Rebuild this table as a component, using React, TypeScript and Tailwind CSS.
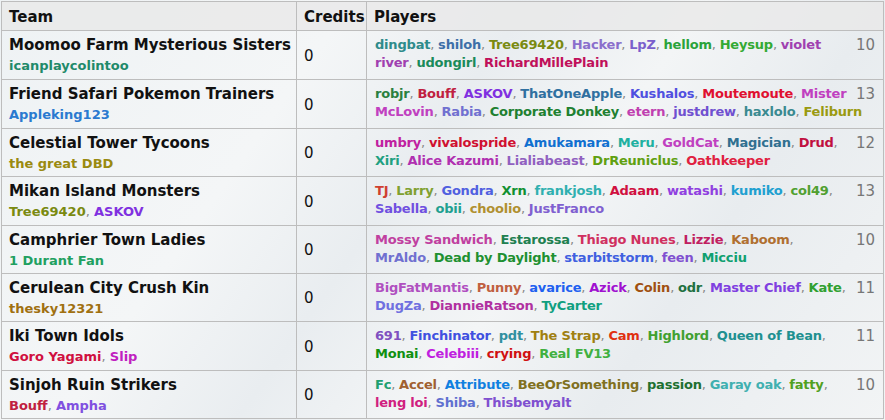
import React from "react";

type P = [string, string];
type Row = { team: string; owners: P[]; credits: string; line1: P[]; line2: P[]; split?: boolean; count: string; h: string };

const rows: Row[] = [
  {
    team: "Moomoo Farm Mysterious Sisters",
    owners: [["icanplaycolintoo", "#1f8a6a"]],
    credits: "0",
    count: "10",
    h: "h-[49px]",
    split: true,
    line1: [
      ["dingbat", "#2e8b8b"], ["shiloh", "#3d6fa8"], ["Tree69420", "#7a8a10"], ["Hacker", "#8a6fcc"],
      ["LpZ", "#7a5fcc"], ["hellom", "#2aa33a"], ["Heysup", "#33aa33"], ["violet", "#a040b0"],
    ],
    line2: [["river", "#a040b0"], ["udongirl", "#1a8a5a"], ["RichardMillePlain", "#c0105a"]],
  },
  {
    team: "Friend Safari Pokemon Trainers",
    owners: [["Appleking123", "#2a7ad0"]],
    credits: "0",
    count: "13",
    h: "h-[49px]",
    split: true,
    line1: [
      ["robjr", "#2a8040"], ["Bouff", "#c02040"], ["ASKOV", "#8030e0"], ["ThatOneApple", "#3070a0"],
      ["Kushalos", "#5050e0"], ["Moutemoute", "#e01030"], ["Mister", "#c040c0"],
    ],
    line2: [
      ["McLovin", "#c040c0"], ["Rabia", "#7070d0"], ["Corporate Donkey", "#208030"], ["etern", "#c040b0"],
      ["justdrew", "#7050d0"], ["haxlolo", "#3a8a90"], ["Feliburn", "#9a9a10"],
    ],
  },
  {
    team: "Celestial Tower Tycoons",
    owners: [["the great DBD", "#9a8a10"]],
    credits: "0",
    count: "12",
    h: "h-[48px]",
    line1: [
      ["umbry", "#c020a0"], ["vivalospride", "#d01030"], ["Amukamara", "#1070d0"], ["Meru", "#20b0a0"],
      ["GoldCat", "#c040c0"], ["Magician", "#307090"], ["Drud", "#c01040"],
    ],
    line2: [
      ["Xiri", "#20a080"], ["Alice Kazumi", "#b030b0"], ["Lialiabeast", "#9060c0"], ["DrReuniclus", "#60a010"],
      ["Oathkeeper", "#e02040"],
    ],
  },
  {
    team: "Mikan Island Monsters",
    owners: [["Tree69420", "#7a8a10"], ["ASKOV", "#8030e0"]],
    credits: "0",
    count: "13",
    h: "h-[49px]",
    line1: [
      ["TJ", "#d04030"], ["Larry", "#80a030"], ["Gondra", "#5060e0"], ["Xrn", "#109030"],
      ["frankjosh", "#30b0b0"], ["Adaam", "#d01040"], ["watashi", "#9040e0"], ["kumiko", "#20a0d0"],
      ["col49", "#50a030"],
    ],
    line2: [["Sabella", "#7050e0"], ["obii", "#20a090"], ["choolio", "#b09030"], ["JustFranco", "#8060d0"]],
  },
  {
    team: "Camphrier Town Ladies",
    owners: [["1 Durant Fan", "#20a060"]],
    credits: "0",
    count: "10",
    h: "h-[48px]",
    line1: [
      ["Mossy Sandwich", "#c040a0"], ["Estarossa", "#208050"], ["Thiago Nunes", "#d03060"], ["Lizzie", "#c02060"],
      ["Kaboom", "#b07030"],
    ],
    line2: [
      ["MrAldo", "#7070d0"], ["Dead by Daylight", "#209030"], ["starbitstorm", "#4060e0"],
      ["feen", "#8050d0"], ["Micciu", "#10a070"],
    ],
  },
  {
    team: "Cerulean City Crush Kin",
    owners: [["thesky12321", "#a07010"]],
    credits: "0",
    count: "11",
    h: "h-[48px]",
    line1: [
      ["BigFatMantis", "#b050c0"], ["Punny", "#c06040"], ["avarice", "#2060f0"], ["Azick", "#a010d0"],
      ["Colin", "#a05010"], ["odr", "#207040"], ["Master Chief", "#8040e0"], ["Kate", "#30a030"],
    ],
    line2: [["DugZa", "#7070e0"], ["DiannieRatson", "#b030a0"], ["TyCarter", "#10a080"]],
  },
  {
    team: "Iki Town Idols",
    owners: [["Goro Yagami", "#d01040"], ["Slip", "#c020c0"]],
    credits: "0",
    count: "11",
    h: "h-[49px]",
    line1: [
      ["691", "#8050c0"], ["Finchinator", "#4050e0"], ["pdt", "#3090a0"], ["The Strap", "#a08010"],
      ["Cam", "#e03010"], ["Highlord", "#40a030"], ["Queen of Bean", "#209090"],
    ],
    line2: [["Monai", "#109010"], ["Celebiii", "#c020e0"], ["crying", "#d01010"], ["Real FV13", "#40b040"]],
  },
  {
    team: "Sinjoh Ruin Strikers",
    owners: [["Bouff", "#c02040"], ["Ampha", "#8050e0"]],
    credits: "0",
    count: "10",
    h: "h-[48px]",
    line1: [
      ["Fc", "#20a070"], ["Accel", "#a06030"], ["Attribute", "#1080e0"], ["BeeOrSomething", "#807020"],
      ["passion", "#207030"], ["Garay oak", "#40b0b0"], ["fatty", "#50a020"],
    ],
    line2: [["leng loi", "#d02080"], ["Shiba", "#6070d0"], ["Thisbemyalt", "#8050d0"]],
  },
];

function Names({ list, trailing }: { list: P[]; trailing?: boolean }) {
  return (
    <>
      {list.map(([n, c], i) => (
        <React.Fragment key={i}>
          <span className="font-bold" style={{ color: c }}>{n}</span>
          {(i < list.length - 1 || trailing) && <span className="text-[#888888]">, </span>}
        </React.Fragment>
      ))}
    </>
  );
}

export default function App() {
  return (
    <div
      className="w-[885px] h-[420px] overflow-hidden bg-[#eef1f3] bg-[linear-gradient(125deg,#eef2f4_0%,#f4f6f7_30%,#e9edf0_45%,#f3f5f6_60%,#e8ecef_75%,#f2f4f5_100%)] pl-px pt-px"
      style={{ fontFamily: '"DejaVu Sans", Verdana, sans-serif' }}
    >
      <table className="border-collapse text-[#111111] w-[882px] table-fixed">
        <colgroup>
          <col className="w-[295px]" />
          <col className="w-[70px]" />
          <col className="w-[517px]" />
        </colgroup>
        <thead>
          <tr className="h-[29px] bg-[#e8e8e8]/80">
            <th className="border border-[#bdbdbd] text-left font-bold text-[15px] px-[7px] pt-[2px] pb-0">Team</th>
            <th className="border border-[#bdbdbd] text-left font-bold text-[15px] px-[7px] pt-[2px] pb-0">Credits</th>
            <th className="border border-[#bdbdbd] text-left font-bold text-[15px] px-[7px] pt-[2px] pb-0">Players</th>
          </tr>
        </thead>
        <tbody>
          {rows.map((r, i) => (
            <tr key={i} className={r.h}>
              <td className="border border-[#bdbdbd] px-[7px] py-0 align-middle">
                <div className="font-bold text-[15px] leading-[21px] whitespace-nowrap">{r.team}</div>
                <div className="text-[13px] leading-[19px]">
                  <Names list={r.owners} />
                </div>
              </td>
              <td className="border border-[#bdbdbd] px-[7px] pt-[2px] pb-0 align-middle text-[15px]">{r.credits}</td>
              <td className="border border-[#bdbdbd] pl-[8px] pr-[8px] pt-0 pb-[2px] align-middle">
                <div className="text-[13px] leading-[18px] tracking-[-0.2px]">
                  <div className="flex items-start">
                    <span className="whitespace-nowrap min-w-0 flex-1">
                      <Names list={r.line1} trailing={!r.split} />
                    </span>
                    <span className="shrink-0 text-[15px] tracking-normal text-[#777777] leading-[18px] ml-[4px]">{r.count}</span>
                  </div>
                  <div className="whitespace-nowrap">
                    <Names list={r.line2} />
                  </div>
                </div>
              </td>
            </tr>
          ))}
        </tbody>
      </table>
    </div>
  );
}
